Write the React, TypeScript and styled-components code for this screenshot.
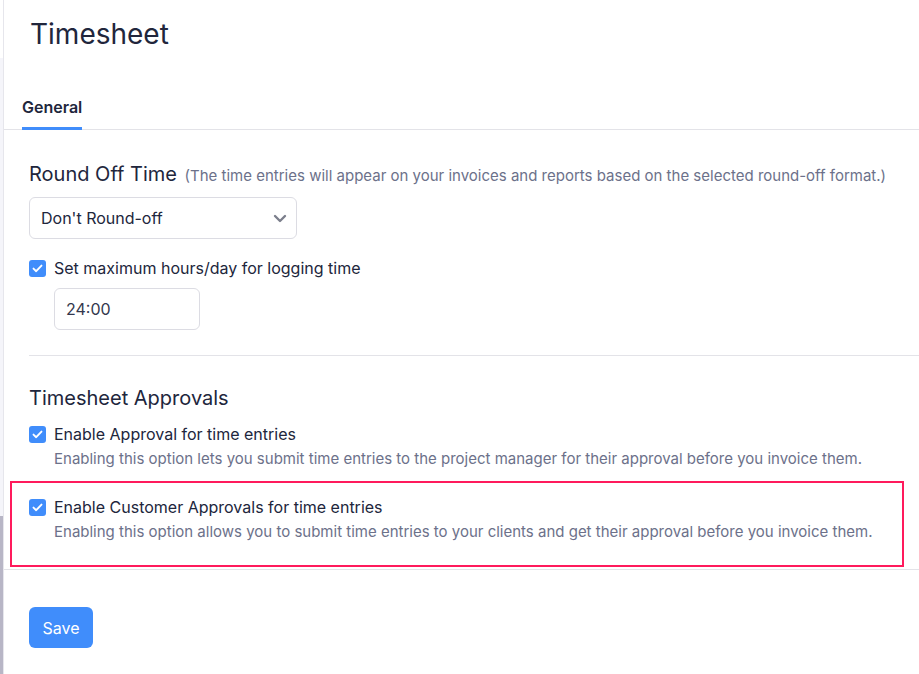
import React from "react";
import styled, { createGlobalStyle } from "styled-components";

const Global = createGlobalStyle`
  html, body { margin: 0; padding: 0; background: #ffffff; }
  body { font-family: Inter, "Noto Sans", sans-serif; color: #21263c; -webkit-font-smoothing: antialiased; }
  * { box-sizing: border-box; }
`;

const Shell = styled.div`
  display: flex;
  min-height: 674px;
  width: 919px;
  overflow: hidden;
`;

const SideStrip = styled.div`
  width: 3px;
  flex: none;
  display: flex;
  flex-direction: column;
`;

const StripPart = styled.div<{ $bg: string; $h?: number }>`
  background: ${(p) => p.$bg};
  height: ${(p) => (p.$h ? `${p.$h}px` : "auto")};
  flex: ${(p) => (p.$h ? "none" : "1")};
`;

const Panel = styled.main`
  flex: 1;
  border-left: 1px solid #e6e6ec;
  display: flex;
  flex-direction: column;
`;

const Title = styled.h1`
  margin: 0;
  padding: 16px 0 0 26px;
  font-size: 28px;
  font-weight: 400;
  line-height: 36px;
  color: #21263c;
`;

const Tabs = styled.nav`
  margin-top: 46px;
  border-bottom: 1px solid #e3e3e8;
  padding-left: 18px;
  display: flex;
`;

const Tab = styled.div<{ $active?: boolean }>`
  font-size: 16px;
  font-weight: 600;
  color: #21263c;
  padding-bottom: 11px;
  border-bottom: 3px solid ${(p) => (p.$active ? "#408dfb" : "transparent")};
  margin-bottom: -1px;
  line-height: 18px;
`;

const Section = styled.div<{ $top?: number }>`
  padding: ${(p) => p.$top ?? 0}px 0 0 25px;
  display: flex;
  flex-direction: column;
`;

const SectionTitle = styled.h2`
  margin: 0;
  font-size: 20px;
  font-weight: 400;
  line-height: 26px;
  color: #21263c;
`;

const Hint = styled.span`
  font-size: 15px;
  color: #6c718a;
  margin-left: 2px;
`;

const Select = styled.div`
  margin-top: 8px;
  width: 268px;
  height: 42px;
  border: 1px solid #dcdce3;
  border-radius: 6px;
  display: flex;
  align-items: center;
  justify-content: space-between;
  padding: 0 9px 0 11px;
  font-size: 16px;
  color: #21263c;
`;

const CheckRow = styled.label<{ $top?: number }>`
  display: flex;
  align-items: center;
  gap: 8px;
  margin-top: ${(p) => p.$top ?? 0}px;
  font-size: 16px;
  line-height: 20px;
  color: #21263c;
`;

const Box = styled.span`
  width: 17px;
  height: 17px;
  border-radius: 3px;
  background: #408dfb;
  display: inline-flex;
  align-items: center;
  justify-content: center;
  flex: none;
`;

const Indented = styled.div`
  padding-left: 25px;
`;

const TimeInput = styled.div`
  margin-top: 10px;
  width: 146px;
  height: 42px;
  border: 1px solid #dcdce3;
  border-radius: 6px;
  display: flex;
  align-items: center;
  padding-left: 11px;
  font-size: 16px;
  color: #33374d;
`;

const Divider = styled.hr<{ $top?: number; $bottom?: number }>`
  border: none;
  border-top: 1px solid #e3e3e8;
  margin: ${(p) => p.$top ?? 0}px 0 ${(p) => p.$bottom ?? 0}px 0;
`;

const Option = styled.div<{ $highlight?: boolean; $top?: number }>`
  display: flex;
  flex-direction: column;
  gap: 5px;
  margin-top: ${(p) => p.$top ?? 0}px;
  ${(p) =>
    p.$highlight
      ? `border: 2px solid #ff1a5c; margin-left: -19px; width: 894px; padding: 14px 0 23px 17px;`
      : ``}
`;

const Desc = styled.div`
  font-size: 15px;
  color: #6c718a;
  padding-left: 25px;
  line-height: 20px;
`;

const SaveButton = styled.button`
  margin-top: 37px;
  width: 64px;
  height: 41px;
  background: #408dfb;
  color: #ffffff;
  border: none;
  border-radius: 6px;
  font-family: inherit;
  font-size: 16px;
`;

const Check = () => (
  <Box>
    <svg width="11" height="9" viewBox="0 0 11 9" fill="none">
      <path d="M1.5 4.6 L4.2 7.2 L9.5 1.6" stroke="#fff" strokeWidth="1.9" strokeLinecap="round" strokeLinejoin="round" />
    </svg>
  </Box>
);

export default function App() {
  return (
    <>
      <Global />
      <Shell>
        <SideStrip>
          <StripPart $bg="#ffffff" $h={58} />
          <StripPart $bg="#f5f5fa" />
          <StripPart $bg="#b8b6c6" $h={158} />
        </SideStrip>
        <Panel>
          <Title>Timesheet</Title>
          <Tabs>
            <Tab $active>General</Tab>
          </Tabs>
          <Section $top={31}>
            <SectionTitle>
              Round Off Time <Hint>(The time entries will appear on your invoices and reports based on the selected round-off format.)</Hint>
            </SectionTitle>
            <Select>
              <span>Don't Round-off</span>
              <svg width="14" height="9" viewBox="0 0 14 9" fill="none">
                <path d="M2 2 L7 7 L12 2" stroke="#7c7f8c" strokeWidth="2.4" strokeLinecap="round" strokeLinejoin="round" />
              </svg>
            </Select>
            <CheckRow $top={19}>
              <Check />
              Set maximum hours/day for logging time
            </CheckRow>
            <Indented>
              <TimeInput>24:00</TimeInput>
            </Indented>
            <Divider $top={25} $bottom={29} />
            <SectionTitle>Timesheet Approvals</SectionTitle>
            <Option $top={13}>
              <CheckRow>
                <Check />
                Enable Approval for time entries
              </CheckRow>
              <Desc>Enabling this option lets you submit time entries to the project manager for their approval before you invoice them.</Desc>
            </Option>
            <Option $highlight $top={12}>
              <CheckRow>
                <Check />
                Enable Customer Approvals for time entries
              </CheckRow>
              <Desc>Enabling this option allows you to submit time entries to your clients and get their approval before you invoice them.</Desc>
            </Option>
          </Section>
          <Divider $top={2} />
          <Section>
            <SaveButton>Save</SaveButton>
          </Section>
        </Panel>
      </Shell>
    </>
  );
}
